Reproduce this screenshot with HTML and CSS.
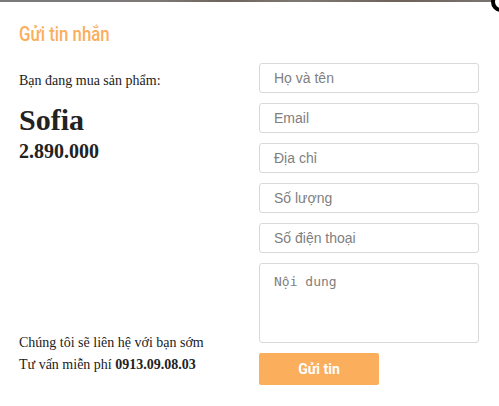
FILE: index.html
```html
<!DOCTYPE html>
<html lang="vi">
<head>
<meta charset="utf-8">
<link rel="stylesheet" href="styles.css">
</head>
<body>
<div class="backdrop"></div>
<div class="modal">
  <span class="close" aria-label="Đóng"></span>
  <h2 class="title">Gửi tin nhắn</h2>
  <div class="content">
    <div class="info">
      <div class="product">
        <p class="lead">Bạn đang mua sản phẩm:</p>
        <h1 class="name">Sofia</h1>
        <p class="price">2.890.000</p>
      </div>
      <div class="contact">
        <p>Chúng tôi sẽ liên hệ với bạn sớm</p>
        <p>Tư vấn miễn phí <b>0913.09.08.03</b></p>
      </div>
    </div>
    <form class="form">
      <input class="field" type="text" placeholder="Họ và tên">
      <input class="field" type="text" placeholder="Email">
      <input class="field" type="text" placeholder="Địa chỉ">
      <input class="field" type="text" placeholder="Số lượng">
      <input class="field" type="text" placeholder="Số điện thoại">
      <textarea class="field area" placeholder="Nội dung"></textarea>
      <button class="send" type="button">Gửi tin</button>
    </form>
  </div>
</div>
</body>
</html>
```
FILE: styles.css
```css
html, body {
  margin: 0;
  padding: 0;
  background: #fff;
  overflow: hidden;
}
.backdrop {
  height: 2px;
  background: linear-gradient(90deg, #7b7b7b 0%, #7d7a78 30%, #6f645c 45%, #7e7872 60%, #6e625a 80%, #7a7470 100%);
}
.modal {
  position: relative;
  height: 404px;
  background: #fff;
  padding: 0 0 0 19px;
  box-sizing: border-box;
}
.close {
  position: absolute;
  top: -10px;
  right: -12px;
  width: 20px;
  height: 20px;
  border: 4px solid #000;
  border-radius: 50%;
  background: #fff;
  box-sizing: border-box;
}
.title {
  margin: 0;
  padding-top: 20px;
  height: 30px;
  font-family: Roboto, "Liberation Sans", sans-serif;
  font-weight: 500;
  font-size: 21px;
  line-height: 24px;
  color: #fbae5c;
  transform: scaleX(0.8);
  transform-origin: left center;
  white-space: nowrap;
}
.content {
  display: grid;
  grid-template-columns: 240px 220px;
  margin-top: 11px;
}
.info {
  display: flex;
  flex-direction: column;
  justify-content: space-between;
  font-family: "Liberation Serif", "Times New Roman", serif;
  color: #222;
  padding-bottom: 9px;
}
.lead {
  margin: 9px 0 0;
  font-size: 14px;
  line-height: 18px;
}
.name {
  margin: 13px 0 0;
  font-size: 30px;
  line-height: 34px;
  font-weight: bold;
}
.price {
  margin: 2px 0 0;
  font-size: 20px;
  line-height: 24px;
  font-weight: bold;
}
.contact p {
  margin: 0;
  font-size: 14px;
  line-height: 22px;
}
.form {
  display: flex;
  flex-direction: column;
  gap: 10px;
  margin: 0;
}
.field {
  display: block;
  width: 220px;
  height: 30px;
  box-sizing: border-box;
  border: 1px solid #d9d9d9;
  border-radius: 3px;
  padding: 0 14px;
  font-family: "Liberation Sans", Arial, sans-serif;
  font-size: 14px;
  color: #555;
  background: #fff;
  margin: 0;
}
.field::placeholder {
  color: #808080;
}
.area {
  height: 80px;
  padding: 10px 14px;
  resize: none;
  font-family: "DejaVu Sans Mono", monospace;
  font-size: 13px;
  line-height: 16px;
}
.send {
  width: 120px;
  height: 32px;
  border: none;
  border-radius: 2px;
  background: #fbae5c;
  color: #fff;
  font-family: Roboto, "Liberation Sans", sans-serif;
  font-weight: bold;
  font-size: 14px;
  padding: 0;
}
```
